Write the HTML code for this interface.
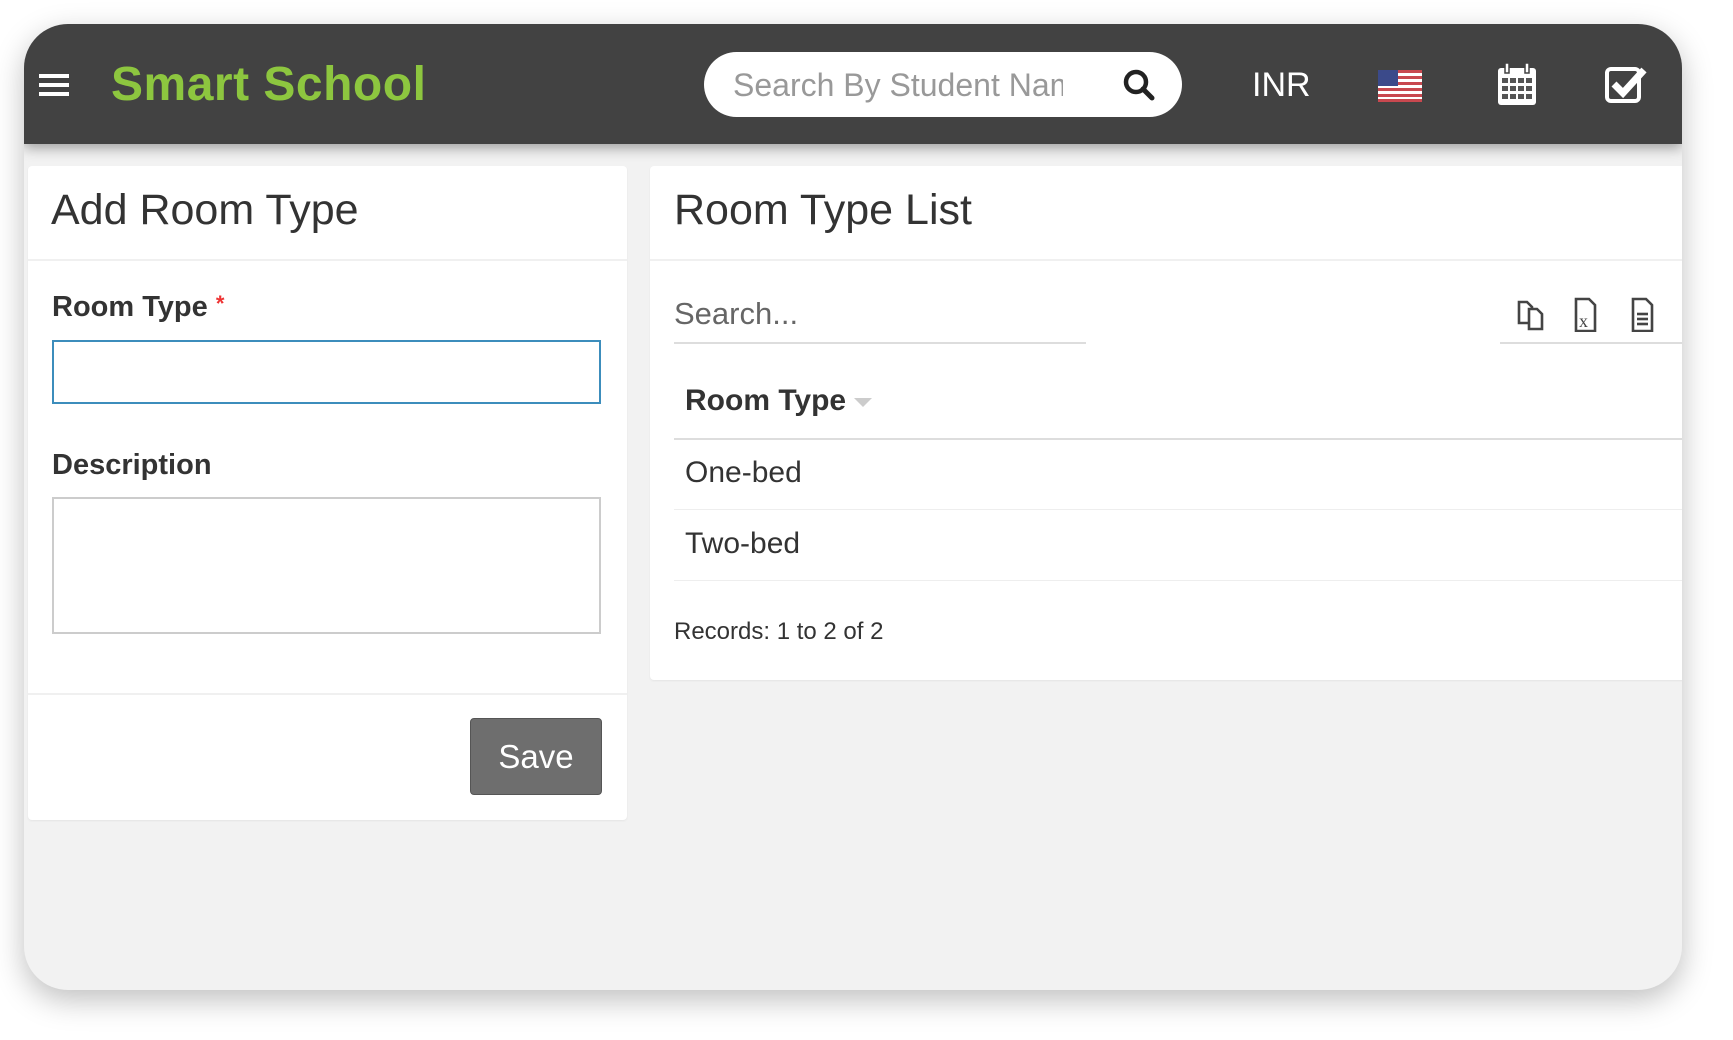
<!DOCTYPE html>
<html><head><meta charset="utf-8"><style>
*{box-sizing:border-box;margin:0;padding:0}
body{width:1733px;height:1040px;background:#fff;font-family:"Liberation Sans",sans-serif;position:relative;overflow:hidden}
.frame{position:absolute;left:24px;top:24px;width:1658px;height:966px;background:#f2f2f2;border-radius:44px;box-shadow:0 10px 30px rgba(0,0,0,.25);overflow:hidden}
.hdr{position:absolute;left:0;top:0;width:1658px;height:120px;background:#424242;box-shadow:0 4px 12px rgba(0,0,0,.35)}
.abs{position:absolute}
.logo{left:87px;top:33px;font-size:48px;font-weight:bold;color:#8dc63f;letter-spacing:0.5px}
.pill{left:680px;top:28px;width:478px;height:65px;background:#fff;border-radius:33px}
.pill span{position:absolute;left:29px;top:15px;font-size:32px;color:#999;white-space:nowrap;width:330px;overflow:hidden}
.inr{left:1228px;top:42px;font-size:34px;color:#fff}
.panel{position:absolute;background:#fff;border-radius:4px;box-shadow:0 1px 2px rgba(0,0,0,.06)}
.title{font-size:43px;color:#333}
.lbl{font-size:29px;font-weight:bold;color:#333}
</style></head><body>
<div class="frame">
 <div class="hdr">
  <svg class="abs" style="left:15px;top:50px" width="30" height="24"><rect y="0" width="30" height="4" fill="#fff"/><rect y="9" width="30" height="4" fill="#fff"/><rect y="18" width="30" height="4" fill="#fff"/></svg>
  <div class="abs logo">Smart School</div>
  <div class="abs pill"><span>Search By Student Name</span>
   <svg class="abs" style="left:418px;top:16px" width="34" height="34" viewBox="0 0 34 34"><circle cx="14" cy="14" r="10" fill="none" stroke="#222" stroke-width="4.5"/><line x1="21" y1="21" x2="30" y2="30" stroke="#222" stroke-width="5" stroke-linecap="round"/></svg>
  </div>
  <div class="abs inr">INR</div>
  <svg class="abs" style="left:1354px;top:46px" width="44" height="32" viewBox="0 0 44 32">
   <rect width="44" height="32" fill="#fff"/>
   <g fill="#c8484f"><rect y="0" width="44" height="3"/><rect y="6" width="44" height="3"/><rect y="12" width="44" height="3"/><rect y="18" width="44" height="3"/><rect y="24" width="44" height="3"/><rect y="29" width="44" height="3"/></g>
   <rect width="20" height="16" fill="#3b4a8a"/></svg>
  <svg class="abs" style="left:1473px;top:38px" width="40" height="44" viewBox="0 0 40 44">
   <rect x="1" y="6" width="38" height="37" rx="3" fill="#fff"/>
   <rect x="8" y="1" width="4" height="10" fill="#fff" stroke="#424242" stroke-width="1.5"/><rect x="28" y="1" width="4" height="10" fill="#fff" stroke="#424242" stroke-width="1.5"/>
   <g fill="#555"><rect x="5" y="16" width="6" height="5"/><rect x="13" y="16" width="6" height="5"/><rect x="21" y="16" width="6" height="5"/><rect x="29" y="16" width="6" height="5"/><rect x="5" y="24" width="6" height="5"/><rect x="13" y="24" width="6" height="5"/><rect x="21" y="24" width="6" height="5"/><rect x="29" y="24" width="6" height="5"/><rect x="5" y="32" width="6" height="5"/><rect x="13" y="32" width="6" height="5"/><rect x="21" y="32" width="6" height="5"/><rect x="29" y="32" width="6" height="5"/></g></svg>
  <svg class="abs" style="left:1580px;top:40px" width="46" height="40" viewBox="0 0 46 40">
   <rect x="3" y="5" width="32" height="32" rx="4" fill="none" stroke="#fff" stroke-width="4"/>
   <path d="M10 20 L19 29 L40 6" fill="none" stroke="#fff" stroke-width="7"/></svg>
 </div>

 <div class="panel" style="left:4px;top:142px;width:599px;height:654px">
  <div class="abs title" style="left:23px;top:20px">Add Room Type</div>
  <div class="abs" style="left:0;top:93px;width:599px;height:2px;background:#f0f0f0"></div>
  <div class="abs lbl" style="left:24px;top:125px">Room Type <span style="color:#e33;font-size:22px;vertical-align:top">*</span></div>
  <div class="abs" style="left:24px;top:174px;width:549px;height:64px;border:2px solid #3c8dbc"></div>
  <div class="abs lbl" style="left:24px;top:283px">Description</div>
  <div class="abs" style="left:24px;top:331px;width:549px;height:137px;border:2px solid #ccc"></div>
  <div class="abs" style="left:0;top:527px;width:599px;height:2px;background:#f0f0f0"></div>
  <div class="abs" style="left:442px;top:552px;width:132px;height:77px;background:#6e6e6e;border:1px solid #555;border-radius:4px;color:#fff;font-size:33px;text-align:center;line-height:75px">Save</div>
 </div>

 <div class="panel" style="left:626px;top:142px;width:1040px;height:514px">
  <div class="abs title" style="left:24px;top:20px">Room Type List</div>
  <div class="abs" style="left:0;top:93px;width:1040px;height:2px;background:#f0f0f0"></div>
  <div class="abs" style="left:24px;top:130px;font-size:31px;color:#666">Search...</div>
  <div class="abs" style="left:24px;top:176px;width:412px;height:2px;background:#ddd"></div>
  <div class="abs" style="left:850px;top:176px;width:190px;height:2px;background:#ddd"></div>
  <svg class="abs" style="left:866px;top:130px" width="150" height="36" viewBox="0 0 150 36">
   <g fill="#fff" stroke="#444" stroke-width="2.6">
    <path d="M3 6 h8 l5 5 v16 h-13z"/><path d="M13 13 h8 l5 5 v15 h-13z"/>
    <path d="M60 3 h13 l6 6 v26 h-19z"/><path d="M117 3 h13 l6 6 v26 h-19z"/></g>
   <text x="63" y="31" font-family="Liberation Serif,serif" font-size="18" fill="#444">x</text>
   <g stroke="#444" stroke-width="2.6"><line x1="121" y1="18" x2="132" y2="18"/><line x1="121" y1="23" x2="132" y2="23"/><line x1="121" y1="28" x2="132" y2="28"/></g></svg>
  <div class="abs" style="left:35px;top:218px;font-size:30px;font-weight:bold;color:#333">Room Type <span style="display:inline-block;width:0;height:0;border-left:9px solid transparent;border-right:9px solid transparent;border-top:9px solid #ccc;vertical-align:middle"></span></div>
  <div class="abs" style="left:24px;top:272px;width:1016px;height:2px;background:#ddd"></div>
  <div class="abs" style="left:35px;top:290px;font-size:30px;color:#333">One-bed</div>
  <div class="abs" style="left:24px;top:343px;width:1016px;height:1px;background:#eee"></div>
  <div class="abs" style="left:35px;top:361px;font-size:30px;color:#333">Two-bed</div>
  <div class="abs" style="left:24px;top:414px;width:1016px;height:1px;background:#eee"></div>
  <div class="abs" style="left:24px;top:452px;font-size:24px;color:#333">Records: 1 to 2 of 2</div>
 </div>
</div>
</body></html>
